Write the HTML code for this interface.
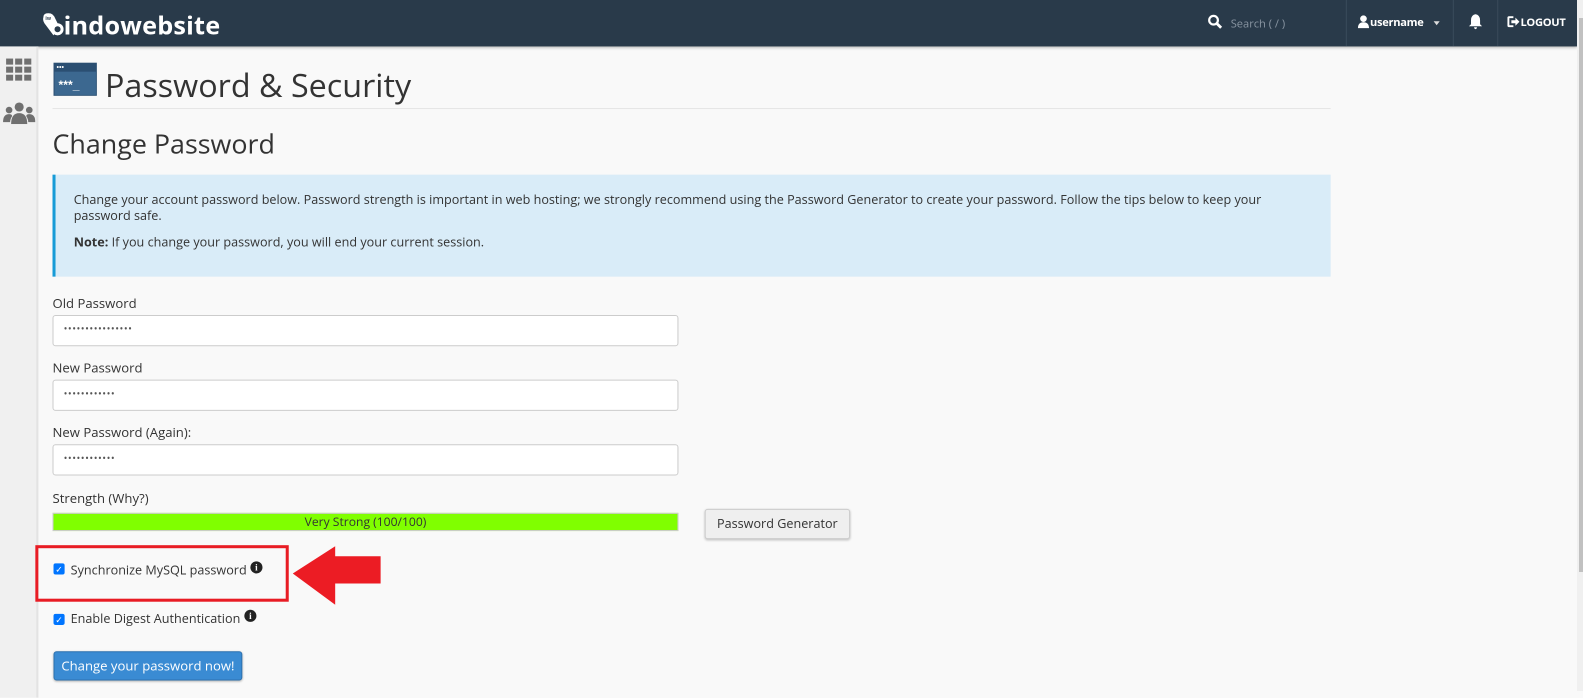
<!DOCTYPE html>
<html><head><meta charset="utf-8"><style>
*{box-sizing:border-box;margin:0;padding:0}
body{width:1583px;height:691px;overflow:hidden;background:#f9f9f9;font-family:"Open Sans","Liberation Sans",sans-serif;color:#333;position:relative}
#w{position:absolute;left:0;top:0;width:1568px;height:691px;transform:scale(1.0096);transform-origin:0 0}
.hdr{position:absolute;left:0;top:0;width:1562px;height:46px;background:#293a4a;box-shadow:0 1px 3px rgba(0,0,0,.3)}
.logo{position:absolute;left:41px;top:8px;color:#fff;font-size:25px;font-weight:bold;letter-spacing:0.2px}
.sb{position:absolute;left:0;top:46px;width:38px;height:645px;background:#f0f0f0;border-right:2px solid #e3e3e3}
.scr{position:absolute;left:1577px;top:0;width:6px;height:691px;background:#f0f0f0}
.scr div{position:absolute;left:2px;top:18px;width:4px;height:554px;background:#c1c1c1}
.t{position:absolute;white-space:nowrap}
.inp{position:absolute;left:52px;width:620px;height:31px;background:#fff;border:1px solid #ccc;border-radius:3px;font-size:10px;letter-spacing:0.5px;padding:5px 0 0 10px;color:#555}
.lbl{position:absolute;left:52px;font-size:13px;color:#333}
.hn{position:absolute;top:0;height:46px;border-left:1px solid #3a4b5b}
</style></head><body>
<div id="w">
<div class="hdr">
 <div class="logo"><svg width="22" height="24" viewBox="0 0 22 24" style="vertical-align:-3px"><path d="M2 4 Q2 0 7 0 Q12 0 14 6 L18 14 Q14 18 12 22 L3 10 Q1 7 2 4Z" fill="#fff"/><circle cx="16" cy="16" r="6" fill="#fff"/><circle cx="16" cy="16" r="3" fill="#293a4a"/><text x="4" y="7" font-size="5" fill="#293a4a" font-family="Liberation Sans">iw</text></svg>indowebsite</div>
 <svg class="t" style="left:1196px;top:14px" width="15" height="15" viewBox="0 0 15 15"><circle cx="6" cy="6" r="4.3" stroke="#fff" stroke-width="2.2" fill="none"/><path d="M9 9 L13.5 13.5" stroke="#fff" stroke-width="2.8"/></svg>
 <div class="t" style="left:1219px;top:16px;font-size:11px;color:#8a96a3">Search ( / )</div>
 <div class="hn" style="left:1333px"></div><div class="hn" style="left:1439px"></div><div class="hn" style="left:1483px"></div>
 <svg class="t" style="left:1345px;top:15px" width="11" height="13" viewBox="0 0 11 13"><circle cx="5.5" cy="3.5" r="3.3" fill="#fff"/><path d="M0 13 Q0 7 5.5 7 Q11 7 11 13Z" fill="#fff"/></svg>
 <div class="t" style="left:1357px;top:15px;font-size:11px;color:#fff;font-weight:bold;letter-spacing:-0.3px">username</div>
 <div class="t" style="left:1420px;top:21px;width:0;height:0;border-left:3.5px solid transparent;border-right:3.5px solid transparent;border-top:4px solid #ddd"></div>
 <svg class="t" style="left:1455px;top:14px" width="13" height="15" viewBox="0 0 13 15"><path d="M6.5 0 Q11 1 11 6 L11 10 L13 12 L0 12 L2 10 L2 6 Q2 1 6.5 0Z M5 13 L8 13 Q7.5 15 6.5 15 Q5.5 15 5 13Z" fill="#fff"/></svg>
 <svg class="t" style="left:1493px;top:16px" width="12" height="11" viewBox="0 0 12 11"><path d="M6 1 H2 Q1 1 1 2 V9 Q1 10 2 10 H6" stroke="#fff" stroke-width="2" fill="none"/><path d="M4 4 H8 V1.5 L12 5.5 L8 9.5 V7 H4Z" fill="#fff"/></svg>
 <div class="t" style="left:1506px;top:15px;font-size:11px;color:#fff;font-weight:bold;letter-spacing:-0.3px">LOGOUT</div>
</div>
<div class="sb">
 <svg class="t" style="left:6px;top:12px" width="26" height="22"><g fill="#707070"><rect x="0" y="0" width="7" height="6"/><rect x="9" y="0" width="7" height="6"/><rect x="18" y="0" width="7" height="6"/><rect x="0" y="8" width="7" height="6"/><rect x="9" y="8" width="7" height="6"/><rect x="18" y="8" width="7" height="6"/><rect x="0" y="16" width="7" height="6"/><rect x="9" y="16" width="7" height="6"/><rect x="18" y="16" width="7" height="6"/></g></svg>
 <svg class="t" style="left:3px;top:55px" width="32" height="22"><g fill="#707070"><circle cx="16" cy="5" r="4.5"/><circle cx="6" cy="8" r="3.3"/><circle cx="26" cy="8" r="3.3"/><path d="M8 22 Q8 11 16 11 Q24 11 24 22Z"/><path d="M0 20 Q0 12 6 12 Q9 12 9 14 Q7 17 7 20Z"/><path d="M32 20 Q32 12 26 12 Q23 12 23 14 Q25 17 25 20Z"/></g></svg>
</div>
<svg class="t" style="left:53px;top:62px" width="43" height="33"><rect width="43" height="33" fill="#2b4f72"/><rect x="1" y="9" width="41" height="23" fill="#3c6890"/><text x="3" y="7" font-size="7" fill="#fff" font-family="Liberation Sans">•••</text><text x="5" y="26" font-size="12" fill="#fff" font-family="Liberation Sans" font-weight="bold">***_</text></svg>
<div class="t" style="left:104px;top:63px;font-size:32px;color:#333">Password &amp; Security</div>
<div class="t" style="left:52px;top:107px;width:1266px;height:1px;background:#e6e6e6"></div>
<div class="t" style="left:52px;top:124px;font-size:26.6px;color:#333">Change Password</div>
<div class="t" style="left:52px;top:173px;width:1266px;height:101px;background:#d9ecf8;border-left:3px solid #179bd7"></div>
<div class="t" style="left:73px;top:190px;font-size:12.5px;line-height:16px;color:#333;white-space:normal;width:1220px">Change your account password below. Password strength is important in web hosting; we strongly recommend using the Password Generator to create your password. Follow the tips below to keep your password safe.</div>
<div class="t" style="left:73px;top:231px;font-size:12.5px;color:#333"><b>Note:</b> If you change your password, you will end your current session.</div>
<div class="lbl" style="top:291px">Old Password</div>
<div class="inp" style="top:312px">••••••••••••••••</div>
<div class="lbl" style="top:355px">New Password</div>
<div class="inp" style="top:376px">••••••••••••</div>
<div class="lbl" style="top:419px">New Password (Again):</div>
<div class="inp" style="top:440px">••••••••••••</div>
<div class="lbl" style="top:484px">Strength (Why?)</div>
<div class="t" style="left:52px;top:508px;width:620px;height:18px;background:#80ff00;border:1px solid #ccc;font-size:12px;text-align:center;line-height:16px;color:#333">Very Strong (100/100)</div>
<div class="t" style="left:698px;top:504px;width:144px;height:30px;background:#efefef;border:1px solid #ccc;border-radius:3px;box-shadow:0 1px 2px rgba(0,0,0,.2);font-size:12.5px;text-align:center;line-height:28px;color:#333">Password Generator</div>
<div class="t" style="left:35px;top:540px;width:251px;height:56px;border:3px solid #e81c24"></div>
<svg class="t" style="left:290px;top:540px" width="88" height="60"><path d="M0 28 L42 1 L42 11 L87 11 L87 38 L42 38 L42 59Z" fill="#ec1c24"/></svg>
<div class="t" style="left:53px;top:558px;width:11px;height:11px;background:#0075ff;border-radius:2px;color:#fff;font-size:9px;text-align:center;line-height:11px">✓</div>
<div class="t" style="left:70px;top:556px;font-size:12.5px">Synchronize MySQL password</div>
<div class="t" style="left:248px;top:556px;width:12px;height:12px;border-radius:50%;background:#222;color:#fff;font-size:9px;font-weight:bold;text-align:center;line-height:12px;font-family:'Liberation Serif',serif">i</div>
<div class="t" style="left:53px;top:608px;width:11px;height:11px;background:#0075ff;border-radius:2px;color:#fff;font-size:9px;text-align:center;line-height:11px">✓</div>
<div class="t" style="left:70px;top:604px;font-size:12.5px">Enable Digest Authentication</div>
<div class="t" style="left:242px;top:604px;width:12px;height:12px;border-radius:50%;background:#222;color:#fff;font-size:9px;font-weight:bold;text-align:center;line-height:12px;font-family:'Liberation Serif',serif">i</div>
<div class="t" style="left:53px;top:645px;width:187px;height:29px;background:#3a8bd3;border:1px solid #2d72b0;border-radius:3px;box-shadow:0 1px 2px rgba(0,0,0,.3);color:#fff;font-size:13px;text-align:center;line-height:27px">Change your password now!</div>
</div>
<div class="scr"><div></div></div>
</body></html>
